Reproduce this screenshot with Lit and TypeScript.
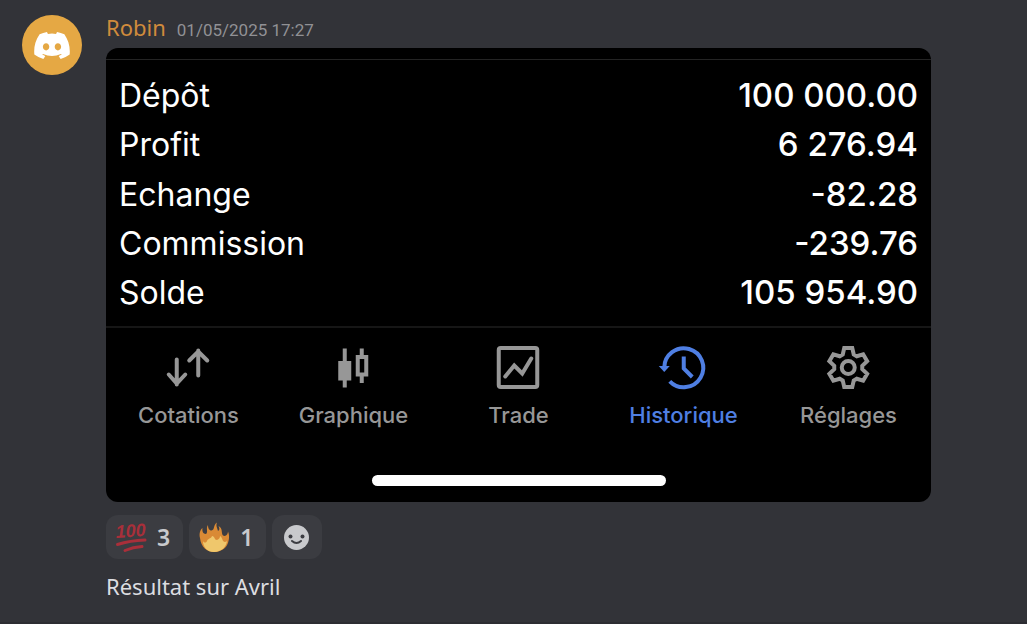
import { LitElement, html, svg, css } from "lit";
import { customElement } from "lit/decorators.js";

const ROWS: [string, string][] = [
  ["Dépôt", "100 000.00"],
  ["Profit", "6 276.94"],
  ["Echange", "-82.28"],
  ["Commission", "-239.76"],
  ["Solde", "105 954.90"],
];

const toothPoints: [number, number][] = [[-5.5, -13], [-4, -19.5], [4, -19.5], [5.5, -13]];
const gearPoints = [0, 1, 2, 3, 4, 5]
  .flatMap((k) => {
    const a = (k * Math.PI) / 3;
    return toothPoints.map(([x, y]) =>
      `${(22 + x * Math.cos(a) - y * Math.sin(a)).toFixed(2)},${(22 + x * Math.sin(a) + y * Math.cos(a)).toFixed(2)}`
    );
  })
  .join(" ");

const TABS = [
  {
    label: "Cotations",
    icon: svg`<path d="M10.5 14V39M2.500 29L10.500 38L19 29M32 30V5M23 15L32 6L41 15" stroke-linecap="round"/>`,
  },
  {
    label: "Graphique",
    icon: svg`<path d="M13.500 3V42M30.500 3V10M30.500 30V37.500"/><rect x="7" y="15.500" width="13" height="19.500" fill="currentColor" stroke="none"/><rect x="26.500" y="11.500" width="8.500" height="17.500"/>`,
  },
  {
    label: "Trade",
    icon: svg`<rect x="2.500" y="2.500" width="38.500" height="39" rx="2"/><path d="M9 31L18 20L26 28L35 13" stroke-linecap="round"/>`,
  },
  {
    label: "Historique",
    active: true,
    icon: svg`<path d="M3 22A19.500 19.500 0 1 1 8.500 35.800M22.500 11V23L31 31.500"/><path d="M-2.500 20.500H8.500L3 26.500Z" fill="currentColor" stroke="none"/>`,
  },
  {
    label: "Réglages",
    icon: svg`<polygon points=${gearPoints}/><circle cx="22" cy="22" r="6.500"/>`,
  },
];

@customElement("app-root")
export class AppRoot extends LitElement {
  static styles = css`
    :host {
      display: block;
      min-height: 100vh;
      box-sizing: border-box;
      background: #323338;
      border-bottom: 2px solid #2c2d32;
      font-family: "Noto Sans", "Open Sans", sans-serif;
      color: #dcdde0;
    }
    .message {
      display: flex;
      gap: 24px;
      padding: 15px 96px 20px 22px;
    }
    .avatar {
      flex: none;
      display: grid;
      place-items: center;
      width: 60px;
      height: 60px;
      border-radius: 50%;
      background: #e5a844;
    }
    .content {
      flex: 1;
      min-width: 0;
    }
    .meta {
      display: flex;
      align-items: baseline;
      gap: 11px;
      height: 33px;
      line-height: 24px;
    }
    .author {
      font-size: 22px;
      color: #d08b3c;
    }
    .date {
      font-family: Roboto, sans-serif;
      font-size: 17px;
      color: #919195;
    }
    .shot {
      overflow: hidden;
      border-radius: 12px;
      background: #000;
      color: #fff;
      font-family: Inter, sans-serif;
      padding-top: 11px;
    }
    .totals {
      display: flex;
      flex-direction: column;
      justify-content: space-between;
      min-height: 238px;
      margin: 0;
      padding: 15px 13px 13px;
      border-top: 1px solid #242424;
      border-bottom: 2px solid #161616;
      line-height: 40px;
    }
    .row {
      display: flex;
      align-items: baseline;
      justify-content: space-between;
    }
    dt {
      font-size: 32px;
    }
    dd {
      margin: 0;
      font-size: 33px;
      font-weight: 500;
    }
    .tabs {
      display: grid;
      grid-template-columns: repeat(5, 1fr);
      padding-top: 17px;
    }
    .tab {
      display: flex;
      flex-direction: column;
      align-items: center;
      gap: 12px;
      padding: 0;
      border: 0;
      background: none;
      color: #979797;
      font: 500 22px/28px Inter, sans-serif;
    }
    .tab svg {
      overflow: visible;
      fill: none;
      stroke: currentColor;
      stroke-width: 4;
    }
    .tab.active {
      color: #4f7fe3;
    }
    .home {
      width: 294px;
      height: 11px;
      margin: 46px auto 16px;
      border-radius: 6px;
      background: #fff;
    }
    .reactions {
      display: flex;
      gap: 6px;
      margin-top: 13px;
    }
    .reaction {
      display: flex;
      align-items: center;
      gap: 10px;
      height: 44px;
      padding: 0 13px 0 9px;
      border: 0;
      border-radius: 12px;
      background: #3b3c41;
      color: #c8c9cc;
      font: 600 23px/30px "Noto Sans", sans-serif;
    }
    .reaction svg {
      overflow: visible;
    }
    .add {
      padding: 0 12px;
    }
    p {
      margin: 12px 0 0;
      font-size: 22px;
      line-height: 30px;
    }
  `;

  render() {
    return html`
      <article class="message">
        <div class="avatar">
          <svg width="36" height="27" viewBox="0 0 127.14 96.36" fill="#fff" aria-hidden="true">
            <path d="M107.7,8.07A105.15,105.15,0,0,0,81.47,0a72.06,72.06,0,0,0-3.36,6.83A97.68,97.68,0,0,0,49,6.83,72.37,72.37,0,0,0,45.64,0,105.89,105.89,0,0,0,19.39,8.09C2.79,32.65-1.71,56.6.54,80.21h0A105.73,105.73,0,0,0,32.71,96.36,77.7,77.7,0,0,0,39.6,85.25a68.42,68.42,0,0,1-10.85-5.18c.91-.66,1.8-1.34,2.66-2a75.57,75.57,0,0,0,64.32,0c.87.71,1.76,1.39,2.66,2a68.68,68.68,0,0,1-10.87,5.19,77,77,0,0,0,6.89,11.1A105.25,105.25,0,0,0,126.6,80.22h0C129.24,52.84,122.09,29.11,107.7,8.07ZM42.45,65.69C36.18,65.69,31,60,31,53s5-12.74,11.43-12.74S54,46,53.89,53,48.84,65.69,42.45,65.69Zm42.24,0C78.41,65.69,73.25,60,73.25,53s5-12.74,11.44-12.74S96.23,46,96.12,53,91.08,65.69,84.69,65.69Z"/>
          </svg>
        </div>
        <div class="content">
          <header class="meta">
            <span class="author">Robin</span>
            <time class="date" datetime="2025-05-01T17:27">01/05/2025 17:27</time>
          </header>
          <section class="shot">
            <dl class="totals">
              ${ROWS.map(([k, v]) => html`<div class="row"><dt>${k}</dt><dd>${v}</dd></div>`)}
            </dl>
            <nav class="tabs">
              ${TABS.map((t) => html`
                <button class="tab ${t.active ? "active" : ""}">
                  <svg width="44" height="44" viewBox="0.75 -0.5 44 44" aria-hidden="true">${t.icon}</svg>
                  <span>${t.label}</span>
                </button>`)}
            </nav>
            <div class="home"></div>
          </section>
          <div class="reactions">
            <button class="reaction">
              <svg width="32" height="30" viewBox="0 0 32 30" aria-hidden="true">
                <text x="1" y="16" transform="rotate(-4 1 16)" font-family="Liberation Sans" font-weight="700" font-style="italic" font-size="18" fill="#a92f3a">100</text>
                <path d="M2.500 22.500Q15 18.500 30 18M10 28.500Q18 25 27 24.500" fill="none" stroke="#a92f3a" stroke-width="3" stroke-linecap="round"/>
              </svg>
              <span>3</span>
            </button>
            <button class="reaction">
              <svg width="32" height="30" viewBox="0 0 32 30" aria-hidden="true">
                <path d="M2 16C1 12 2 8 4.500 6C4 9 5 12 8 12C10.500 10 7.500 6 10 3C10 6 11 8.500 13.500 8.500C17 8 15 3 19 0.500C17.500 4 19.500 6 20 9C22 8 21.500 6 20.500 4C25 6 23 11 25 13.500C28 15 30 12 30 9.500C32 14 31 20 28.500 24C25.500 28 20.500 30 16 30C9 30 3 25 2 16Z" fill="#d98a35"/>
                <path d="M5 19C6 21 8 21 9 19C10 16 13 17 14 14C17 14 16 18 19 18C21 17 22 16 22 14C25 16 24 20 27 20C28 20 29 19 29 18C29 25 23 30 16 30C9 30 5 25 5 19Z" fill="#efc76c"/>
              </svg>
              <span>1</span>
            </button>
            <button class="reaction add" aria-label="Ajouter une réaction">
              <svg width="26" height="26" viewBox="0 0 26 26" aria-hidden="true">
                <circle cx="12.500" cy="13.500" r="12.500" fill="#c8c9cc"/>
                <circle cx="6.500" cy="12.500" r="2" fill="#3b3c41"/>
                <circle cx="18.500" cy="12.500" r="2" fill="#3b3c41"/>
                <path d="M8 17Q12.500 21 17 17" fill="none" stroke="#3b3c41" stroke-width="2" stroke-linecap="round"/>
              </svg>
            </button>
          </div>
          <p>Résultat sur Avril</p>
        </div>
      </article>
    `;
  }
}
